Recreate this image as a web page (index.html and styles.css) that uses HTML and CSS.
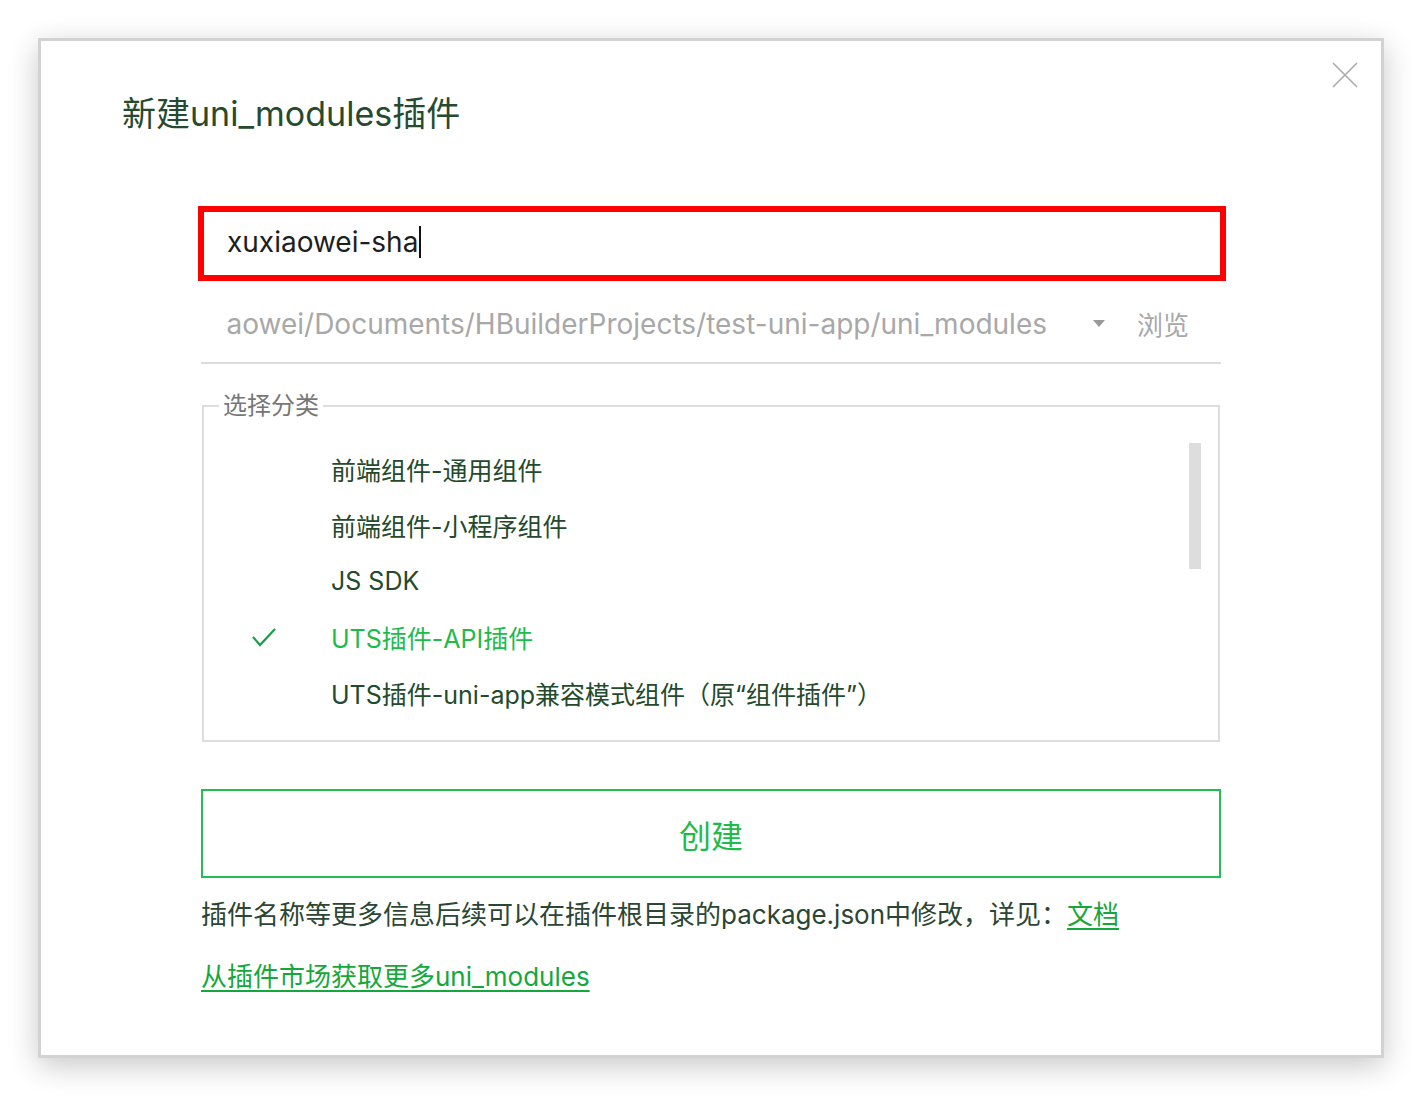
FILE: index.html
```html
<html lang="zh-CN">
<head>
    <meta charset="UTF-8">
    <meta name="viewport" content="width=device-width, initial-scale=1">
    <title>新建uni_modules插件</title>
    <link rel="stylesheet" href="styles.css">
</head>
<body>
    <div class="dialog">
        <a class="close_btn" href="javascript:void(0)">
            <svg width="26" height="26" viewBox="0 0 26 26">
                <path d="M1 1 L25 25 M25 1 L1 25" stroke="#aaaaaa" stroke-width="1.6" fill="none"/>
            </svg>
        </a>

        <h1 class="title">新建uni_modules插件</h1>

        <div class="content">
            <div class="name_box">
                <span class="name_text">xuxiaowei-sha</span><span class="caret"></span>
            </div>

            <div class="path_row">
                <div class="path_clip">
                    <span class="path_text">/Users/xuxiaowei/Documents/HBuilderProjects/test-uni-app/uni_modules</span>
                </div>
                <span class="arrow"></span>
                <span class="browse">浏览</span>
            </div>

            <fieldset class="category">
                <legend>选择分类</legend>
                <div class="scroll_thumb"></div>
                <ul class="cat_list">
                    <li><span class="check"></span><span>前端组件-通用组件</span></li>
                    <li><span class="check"></span><span>前端组件-小程序组件</span></li>
                    <li><span class="check"></span><span>JS SDK</span></li>
                    <li class="selected">
                        <span class="check">
                            <svg width="26" height="22" viewBox="0 0 26 22">
                                <path d="M2 11 L9 19 L24 3" stroke="#1a9e42" stroke-width="2.2" fill="none"/>
                            </svg>
                        </span>
                        <span>UTS插件-API插件</span>
                    </li>
                    <li><span class="check"></span><span>UTS插件-uni-app兼容模式组件（原“组件插件”）</span></li>
                </ul>
            </fieldset>

            <button class="create_btn">创建</button>

            <p class="info">插件名称等更多信息后续可以在插件根目录的package.json中修改，详见：<a href="">文档</a></p>
            <p class="market"><a href="">从插件市场获取更多uni_modules</a></p>
        </div>
    </div>
</body>
</html>
```

FILE: styles.css
```css
* {
    margin: 0;
    padding: 0;
    box-sizing: border-box;
}
body {
    font-family: "Inter", "Noto Sans CJK SC", sans-serif;
    background-color: #fff;
    overflow: hidden;
}
.dialog {
    position: relative;
    margin: 38px 0 0 38px;
    width: 1346px;
    height: 1020px;
    border: 3px solid #d2d2d2;
    background-color: #fff;
    box-shadow: 0 8px 28px rgba(0, 0, 0, 0.22);
}
.close_btn {
    position: absolute;
    top: 21px;
    right: 23px;
    display: block;
    width: 26px;
    height: 26px;
}
.close_btn svg {
    display: block;
}
.title {
    margin: 53px 0 0 81px;
    font-size: 34px;
    line-height: 40px;
    font-weight: normal;
    color: #264a2e;
}
.content {
    width: 1020px;
    margin: 72px auto 0;
}
.name_box {
    display: flex;
    align-items: center;
    width: 1028px;
    height: 75px;
    margin-left: -3px;
    border: 6px solid #ff0000;
    padding-left: 23px;
    padding-bottom: 3px;
}
.name_text {
    font-size: 28px;
    color: #1e1e1e;
}
.caret {
    display: block;
    width: 2px;
    height: 32px;
    margin-left: 1px;
    background-color: #111;
}
.path_row {
    display: flex;
    align-items: center;
    height: 83px;
    border-bottom: 2px solid #dcdcdc;
    padding-left: 24px;
    padding-right: 32px;
    padding-top: 4px;
}
.path_clip {
    display: flex;
    justify-content: flex-end;
    width: 822px;
    overflow: hidden;
    white-space: nowrap;
}
.path_text {
    font-size: 28px;
    color: #a8a8a8;
}
.arrow {
    width: 0;
    height: 0;
    margin-left: 46px;
    border-left: 6px solid transparent;
    border-right: 6px solid transparent;
    border-top: 7px solid #999;
}
.browse {
    margin-left: auto;
    font-size: 26px;
    color: #a8a8a8;
}
.category {
    position: relative;
    width: 1018px;
    height: 351px;
    margin-top: 27px;
    margin-left: 1px;
    border: 2px solid #dddddd;
    padding: 20px 0 0 0;
}
.category legend {
    margin-left: 15px;
    padding: 0 4px;
    font-size: 24px;
    line-height: 30px;
    color: #777;
}
.scroll_thumb {
    position: absolute;
    top: 22px;
    right: 17px;
    width: 12px;
    height: 126px;
    background-color: #dddddd;
}
.cat_list {
    list-style: none;
}
.cat_list > li {
    display: flex;
    align-items: center;
    height: 56px;
    font-size: 25px;
    color: #234a2b;
}
.check {
    display: flex;
    align-items: center;
    width: 80px;
    margin-left: 47px;
}
.check svg {
    display: block;
}
.cat_list > li.selected {
    color: #1dbb4a;
}
.create_btn {
    display: block;
    width: 1020px;
    height: 89px;
    margin-top: 47px;
    border: 2px solid #23bf4d;
    background-color: #fff;
    font-family: "Inter", "Noto Sans CJK SC", sans-serif;
    font-size: 32px;
    color: #1fbb49;
    cursor: pointer;
}
.info {
    margin-top: 20px;
    font-size: 26px;
    line-height: 34px;
    color: #2b4632;
}
.info a,
.market a {
    color: #14a83c;
    text-decoration: underline;
    text-underline-offset: 4px;
}
.market {
    margin-top: 28px;
    font-size: 26px;
    line-height: 34px;
}
```
